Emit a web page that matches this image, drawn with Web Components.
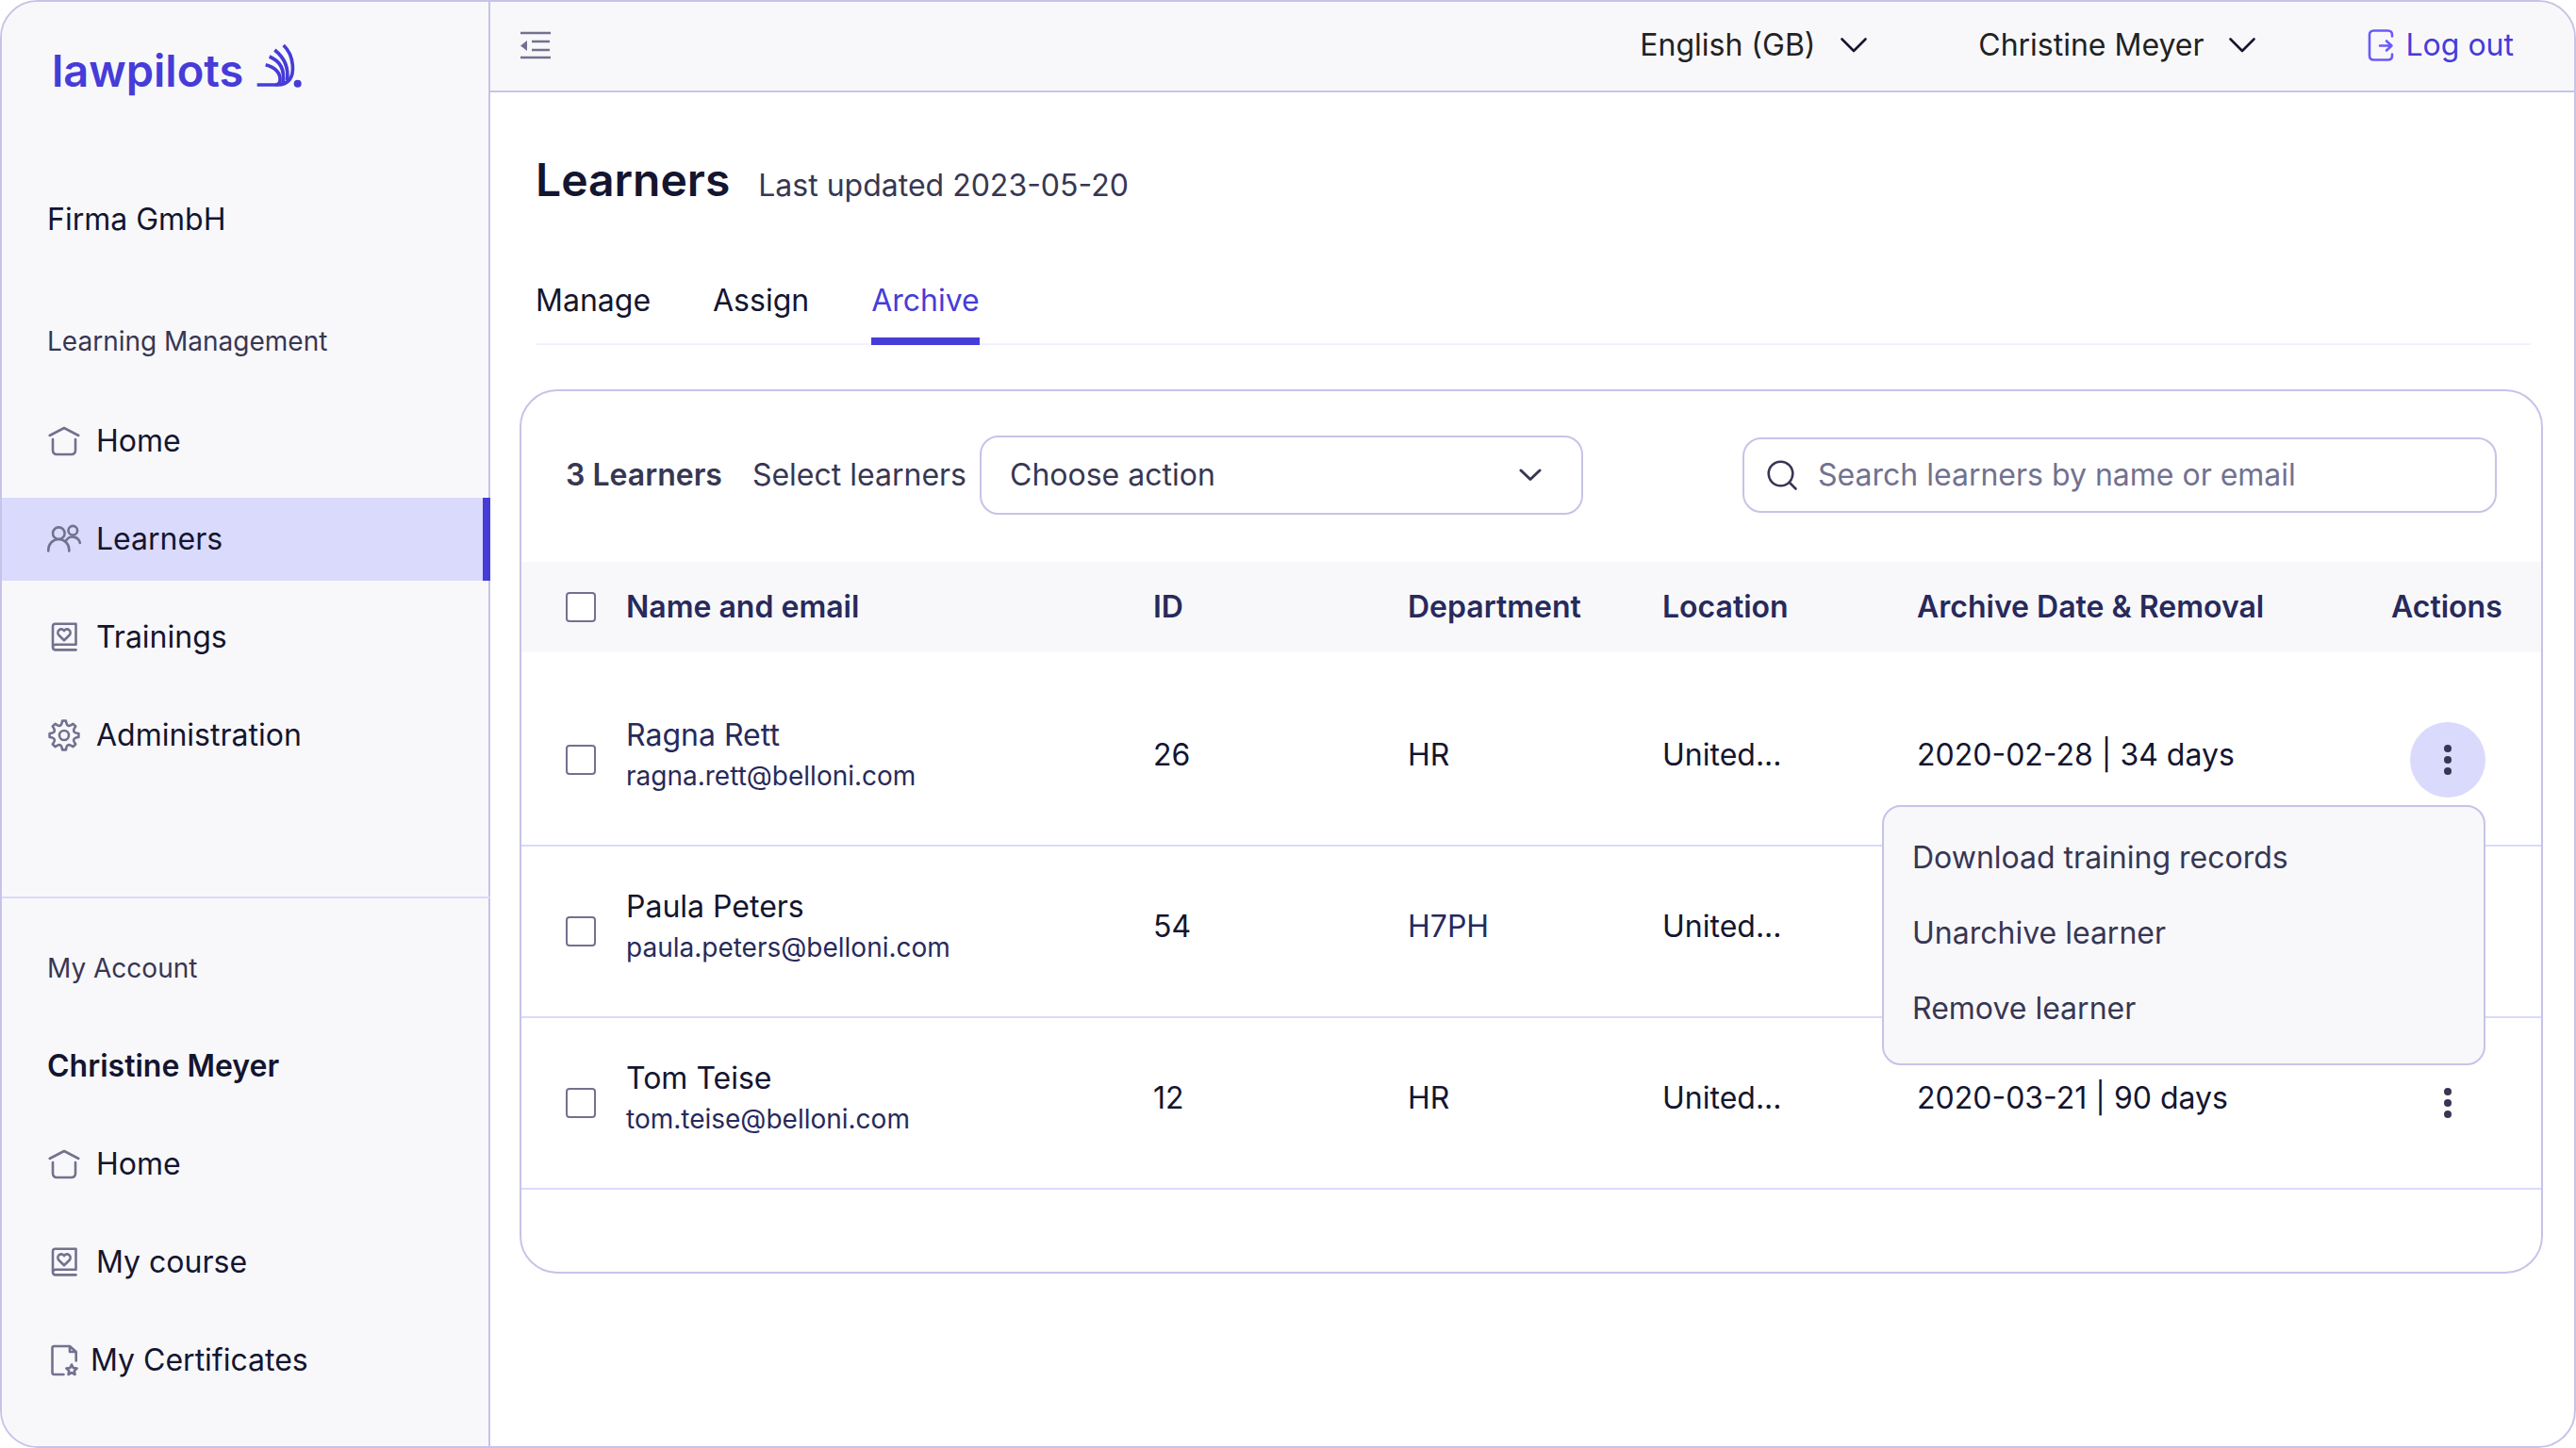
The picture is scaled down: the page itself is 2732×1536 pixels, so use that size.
<!DOCTYPE html>
<html lang="en">
<head>
<meta charset="utf-8">
<meta name="viewport" content="width=device-width, initial-scale=1">
<title>Learners</title>
<style>
    :root {
        --ink: #14152f;
        --navy: #272a5b;
        --text: #373753;
        --muted: #72718f;
        --brand: #463cd8;
        --line: #c5c4e8;
        --line-soft: #dadafc;
        --surface: #f8f8fb;
    }
    body {
        margin: 0;
        background: #fff;
        color: var(--ink);
        font: 400 32px/40px Inter, "Liberation Sans", sans-serif;
    }
</style>
</head>
<body>
<learner-app>
    <side-bar slot="sidebar">
        <span slot="company">Firma GmbH</span>
        <span slot="section">Learning Management</span>
        <nav-item slot="main" icon="home">Home</nav-item>
        <nav-item slot="main" icon="users" active>Learners</nav-item>
        <nav-item slot="main" icon="book">Trainings</nav-item>
        <nav-item slot="main" icon="cog">Administration</nav-item>
        <span slot="account">My Account</span>
        <span slot="user">Christine Meyer</span>
        <nav-item slot="personal" icon="home">Home</nav-item>
        <nav-item slot="personal" icon="book">My course</nav-item>
        <nav-item slot="personal" icon="certificate" tight>My Certificates</nav-item>
    </side-bar>
    <top-bar slot="header"></top-bar>
    <page-title>Learners<span slot="note">Last updated 2023-05-20</span></page-title>
    <tab-list></tab-list>
    <learner-card>
        <learner-toolbar slot="toolbar"></learner-toolbar>
        <learner-table></learner-table>
    </learner-card>
</learner-app>

<script>
    // closed outline of an eight toothed cog, centred in a 36 unit box
    const cogPath = () => {
        const at = (radius, degrees) => {
            const angle = degrees * Math.PI / 180;
            return `${(18 + radius * Math.sin(angle)).toFixed(1)} ${(18 - radius * Math.cos(angle)).toFixed(1)}`;
        };
        let d = `M${at(15.5, -7)}`;
        for (let a = 0; a < 360; a += 45) {
            d += `L${at(15.5, a + 7)}L${at(12.6, a + 12)}Q${at(10, a + 22.5)} ${at(12.6, a + 33)}L${at(15.5, a + 38)}`;
        }
        return d + 'Z';
    };

    const icons = {
        home: [36, 36, '<path d="M2.7 12 18 4l15.3 8M6 16v11.5Q6 32 10.5 32h15q4.5 0 4.5-4.5V16"/>'],
        users: [36, 36, '<circle cx="12.3" cy="11.7" r="6.3"/><path d="M1.3 30.5v-1.5a11 11 0 0 1 22 0v1.5"/><circle cx="27.3" cy="8.7" r="4.8"/><path d="M20 19.5a8 8 0 0 1 14.8 2.5"/>'],
        book: [36, 36, '<path d="M6 28.5V6.5q0-2.7 2.7-2.7H30.5V25.7H9q-3 0-3 2.8t3 2.9h21.5"/><path d="M18 21.2l-5.6-5.4c-3.4-4.2 2.4-9.2 5.6-4.7 3.2-4.5 9 .5 5.6 4.7z"/>'],
        cog: [36, 36, `<path d="${cogPath()}"/><circle cx="18" cy="18" r="5"/>`],
        certificate: [36, 36, '<path d="M17.5 33H7.5q-2 0-2-2V5q0-2 2-2H24l6.7 6v9.5M24 3v6h6.7"/><path d="M26 22.5l1.7 3.5 3.9.5-2.8 2.6.7 3.9-3.5-1.9-3.5 1.9.7-3.9-2.8-2.6 3.9-.5z"/>'],
        collapse: [32, 30, '<path d="M0 2h32M12 11h19M12 20h19M0 28h32" stroke-width="2.6" stroke-linecap="butt"/><path d="M0 15.5 7 10v11z" fill="currentColor" stroke="none"/>'],
        chevron: [28, 16, '<path d="M1.5 1.5 14 14 26.5 1.5"/>'],
        'chevron-small': [24, 14, '<path d="M2 2l10 9.5L22 2" stroke-width="3"/>'],
        logout: [30, 36, '<path d="M27 8.5V7q0-4.5-4.5-4.5h-15Q3 2.5 3 7v22q0 4.5 4.5 4.5h15q4.5 0 4.5-4.5v-1.5M14 18.5h12.5M21 13.5l5.5 5-5.5 5"/>'],
        search: [32, 32, '<circle cx="14.5" cy="14.5" r="12.8"/><path d="M24 24l6.5 6.5"/>'],
        dots: [8, 32, '<g fill="currentColor" stroke="none"><circle cx="4" cy="4" r="4"/><circle cx="4" cy="16" r="4"/><circle cx="4" cy="28" r="4"/></g>'],
    };

    class BaseElement extends HTMLElement {
        constructor() {
            super();
            this._shadowdom = this.attachShadow({ mode: 'open' });
        }

        connectedCallback() {
            this.render();
        }
    }

    class UiIcon extends BaseElement {
        render() {
            const [width, height, shapes] = icons[this.getAttribute('name')];
            this._shadowdom.innerHTML = /* html */ `
                <style>
                    :host {
                        display: block;
                        flex: none;
                    }
                    svg {
                        display: block;
                        overflow: visible;
                        fill: none;
                        stroke: currentColor;
                        stroke-width: 2.6;
                        stroke-linecap: round;
                        stroke-linejoin: round;
                    }
                </style>
                <svg width="${width}" height="${height}" viewBox="0 0 ${width} ${height}" aria-hidden="true">${shapes}</svg>
            `;
        }
    }

    class BrandLogo extends BaseElement {
        render() {
            this._shadowdom.innerHTML = /* html */ `
                <style>
                    :host {
                        display: block;
                    }
                    a {
                        display: flex;
                        gap: 14px;
                        color: var(--brand);
                        font-size: 47px;
                        font-weight: 600;
                        line-height: 58px;
                        text-decoration: none;
                    }
                    svg {
                        display: block;
                        fill: none;
                        stroke: currentColor;
                        stroke-width: 11;
                    }
                </style>
                <a href="#">lawpilots
                    <svg width="50" height="50" viewBox="698 30 150 150" aria-hidden="true">
                        <path d="M700 162h65c36 0 51-24 48-62-2-24-12-48-29-64"/>
                        <path d="M756 51c30 24 46 56 39 98"/>
                        <path d="M739 72c34 14 50 42 43 84"/>
                        <path d="M727 98c32 8 48 28 46 50q-1 12-14 14"/>
                        <circle cx="829" cy="158" r="12" fill="currentColor" stroke="none"/>
                    </svg>
                </a>
            `;
        }
    }

    class NavItem extends BaseElement {
        render() {
            this._shadowdom.innerHTML = /* html */ `
                <style>
                    :host {
                        display: block;
                    }
                    a {
                        display: flex;
                        align-items: center;
                        gap: 16px;
                        height: 88px;
                        box-sizing: border-box;
                        padding-left: 48px;
                        color: inherit;
                        text-decoration: none;
                    }
                    ui-icon {
                        color: var(--muted);
                    }
                    :host([tight]) a {
                        gap: 10px;
                    }
                    /* the marker of the current page covers the sidebar border */
                    :host([active]) a {
                        margin-right: -2px;
                        background: var(--line-soft);
                        border-right: 8px solid var(--brand);
                    }
                </style>
                <a href="#" ${this.hasAttribute('active') ? 'aria-current="page"' : ''}>
                    <ui-icon name="${this.getAttribute('icon')}"></ui-icon>
                    <slot></slot>
                </a>
            `;
        }
    }

    class SideBar extends BaseElement {
        render() {
            this._shadowdom.innerHTML = /* html */ `
                <style>
                    :host {
                        display: block;
                        background: var(--surface);
                        border-right: 2px solid var(--line);
                    }
                    brand-logo {
                        padding: 44px 0 109px 53px;
                    }
                    p, h2 {
                        margin: 0;
                        padding-left: 48px;
                        font-size: 32px;
                        font-weight: 400;
                        line-height: 40px;
                    }
                    .section {
                        margin-top: 89px;
                        color: var(--text);
                        font-size: 28px;
                    }
                    nav {
                        display: grid;
                        gap: 16px;
                        margin-top: 42px;
                    }
                    .account {
                        margin: 127px -2px 0 0;
                        border-top: 2px solid var(--line-soft);
                    }
                    .account .section {
                        margin-top: 54px;
                    }
                    .account nav {
                        margin: 40px 2px 0 0;
                    }
                    .user {
                        margin-top: 64px;
                        font-weight: 600;
                    }
                </style>
                <brand-logo></brand-logo>
                <p><slot name="company"></slot></p>
                <h2 class="section"><slot name="section"></slot></h2>
                <nav aria-label="Learning Management"><slot name="main"></slot></nav>
                <div class="account">
                    <h2 class="section"><slot name="account"></slot></h2>
                    <p class="user"><slot name="user"></slot></p>
                    <nav aria-label="My Account"><slot name="personal"></slot></nav>
                </div>
            `;
        }
    }

    class TopBar extends BaseElement {
        render() {
            this._shadowdom.innerHTML = /* html */ `
                <style>
                    :host {
                        display: flex;
                        align-items: center;
                        gap: 118px;
                        height: 92px;
                        padding: 0 64px 2px 32px;
                        background: var(--surface);
                        border-bottom: 2px solid var(--line);
                        color: #222;
                    }
                    button, select {
                        appearance: none;
                        margin: 0;
                        padding: 0;
                        border: 0;
                        background: none;
                        color: inherit;
                        font: inherit;
                    }
                    .collapse {
                        margin-right: auto;
                        color: var(--muted);
                    }
                    .dropdown {
                        display: flex;
                        align-items: center;
                        gap: 26px;
                    }
                    .dropdown ui-icon {
                        color: var(--ink);
                    }
                    a {
                        display: flex;
                        align-items: center;
                        gap: 12px;
                        color: var(--brand);
                        text-decoration: none;
                    }
                    a ui-icon {
                        color: #6a5afa;
                    }
                </style>
                <button class="collapse" type="button" aria-label="Collapse sidebar"><ui-icon name="collapse"></ui-icon></button>
                <label class="dropdown">
                    <select aria-label="Language"><option>English (GB)</option></select>
                    <ui-icon name="chevron"></ui-icon>
                </label>
                <button class="dropdown" type="button" aria-haspopup="menu">Christine Meyer<ui-icon name="chevron"></ui-icon></button>
                <a href="#"><ui-icon name="logout"></ui-icon>Log out</a>
            `;
        }
    }

    class PageTitle extends BaseElement {
        render() {
            this._shadowdom.innerHTML = /* html */ `
                <style>
                    :host {
                        display: flex;
                        align-items: baseline;
                        gap: 30px;
                        padding: 65px 46px 0 48px;
                    }
                    h1 {
                        margin: 0;
                        font-size: 48px;
                        font-weight: 600;
                        line-height: 56px;
                    }
                    p {
                        margin: 0;
                        color: var(--text);
                    }
                </style>
                <h1><slot></slot></h1>
                <p><slot name="note"></slot></p>
            `;
        }
    }

    class TabList extends BaseElement {
        render() {
            this._shadowdom.innerHTML = /* html */ `
                <style>
                    :host {
                        display: block;
                        margin: 80px 46px 47px 48px;
                    }
                    nav {
                        display: flex;
                        gap: 66px;
                        box-shadow: inset 0 -2px #f1f0fe;
                    }
                    a {
                        padding-bottom: 19px;
                        border-bottom: 8px solid transparent;
                        color: inherit;
                        text-decoration: none;
                    }
                    a[aria-current] {
                        border-color: var(--brand);
                        color: var(--brand);
                    }
                </style>
                <nav aria-label="Learners">
                    <a href="#">Manage</a>
                    <a href="#">Assign</a>
                    <a href="#" aria-current="page">Archive</a>
                </nav>
            `;
        }
    }

    class LearnerToolbar extends BaseElement {
        render() {
            this._shadowdom.innerHTML = /* html */ `
                <style>
                    :host {
                        display: flex;
                        align-items: center;
                        padding: 47px 47px 50px;
                        color: var(--text);
                    }
                    strong {
                        margin-right: 32px;
                        font-weight: 600;
                    }
                    .action {
                        position: relative;
                        flex: 0 1 640px;
                        margin: 0 auto 0 14px;
                    }
                    select {
                        display: block;
                        appearance: none;
                        width: 100%;
                        height: 84px;
                        box-sizing: border-box;
                        padding: 0 80px 0 30px;
                        border: 2px solid var(--line);
                        border-radius: 20px;
                        background: #fff;
                        color: inherit;
                        font: inherit;
                    }
                    .action ui-icon {
                        position: absolute;
                        top: 35px;
                        right: 44px;
                        pointer-events: none;
                    }
                    .search {
                        display: flex;
                        align-items: center;
                        gap: 22px;
                        flex: 0 1 800px;
                        height: 80px;
                        box-sizing: border-box;
                        padding: 0 24px;
                        border: 2px solid var(--line);
                        border-radius: 20px;
                    }
                    input {
                        flex: 1;
                        min-width: 0;
                        padding: 0;
                        border: 0;
                        outline: 0;
                        background: none;
                        color: inherit;
                        font: inherit;
                    }
                    input::placeholder {
                        color: var(--muted);
                        opacity: 1;
                    }
                </style>
                <strong>3 Learners</strong>
                <label for="action">Select learners</label>
                <div class="action">
                    <select id="action"><option>Choose action</option></select>
                    <ui-icon name="chevron-small"></ui-icon>
                </div>
                <label class="search">
                    <ui-icon name="search"></ui-icon>
                    <input type="search" placeholder="Search learners by name or email" aria-label="Search learners by name or email">
                </label>
            `;
        }
    }

    class CheckBox extends BaseElement {
        render() {
            this._shadowdom.innerHTML = /* html */ `
                <style>
                    :host {
                        display: block;
                    }
                    input {
                        display: block;
                        appearance: none;
                        width: 32px;
                        height: 32px;
                        margin: 0;
                        border: 2px solid var(--muted);
                        border-radius: 4px;
                        background: #fff;
                    }
                    input:checked {
                        background: var(--brand);
                    }
                </style>
                <input type="checkbox" aria-label="${this.getAttribute('label')}">
            `;
        }
    }

    class RowActions extends BaseElement {
        render() {
            const open = this.hasAttribute('open');
            this._shadowdom.innerHTML = /* html */ `
                <style>
                    :host {
                        display: block;
                        position: relative;
                        width: 80px;
                    }
                    button {
                        font: inherit;
                        color: var(--text);
                        border: 0;
                        background: none;
                    }
                    .toggle {
                        display: grid;
                        place-items: center;
                        width: 80px;
                        height: 80px;
                        padding: 0;
                        border-radius: 50%;
                    }
                    .toggle[aria-expanded="true"] {
                        background: var(--line-soft);
                    }
                    .menu {
                        position: absolute;
                        z-index: 1;
                        top: 88px;
                        right: 0;
                        width: 640px;
                        box-sizing: border-box;
                        padding: 14px 0 18px;
                        border: 2px solid var(--line);
                        border-radius: 20px;
                        background: var(--surface);
                    }
                    .menu button {
                        display: block;
                        width: 100%;
                        height: 80px;
                        padding: 0 30px;
                        text-align: left;
                    }
                </style>
                <button class="toggle" type="button" aria-label="Actions" aria-haspopup="menu" aria-expanded="${open}">
                    <ui-icon name="dots"></ui-icon>
                </button>
                ${open ? /* html */ `
                <div class="menu" role="menu">
                    <button type="button" role="menuitem">Download training records</button>
                    <button type="button" role="menuitem">Unarchive learner</button>
                    <button type="button" role="menuitem">Remove learner</button>
                </div>` : ''}
            `;
        }
    }

    class LearnerTable extends BaseElement {
        constructor() {
            super();
            this._learners = [
                { name: 'Ragna Rett', email: 'ragna.rett@belloni.com', id: 26, department: 'HR', location: 'United...', archived: '2020-02-28 | 34 days', open: true, tint: 'name' },
                { name: 'Paula Peters', email: 'paula.peters@belloni.com', id: 54, department: 'H7PH', location: 'United...', archived: '', tint: 'department', covered: true },
                { name: 'Tom Teise', email: 'tom.teise@belloni.com', id: 12, department: 'HR', location: 'United...', archived: '2020-03-21 | 90 days' },
            ];
        }

        row({ name, email, id, department, location, archived, open, tint, covered }) {
            return /* html */ `
                <tr>
                    <td class="check"><check-box label="Select ${name}"></check-box></td>
                    <td class="${tint === 'name' ? 'navy' : ''}">${name}<br><a href="#">${email}</a></td>
                    <td>${id}</td>
                    <td class="${tint === 'department' ? 'navy' : ''}">${department}</td>
                    <td>${location}</td>
                    <td>${archived}</td>
                    <td class="actions">${covered ? '' : `<row-actions ${open ? 'open' : ''}></row-actions>`}</td>
                </tr>
            `;
        }

        render() {
            this._shadowdom.innerHTML = /* html */ `
                <style>
                    :host {
                        display: block;
                    }
                    table {
                        width: 100%;
                        table-layout: fixed;
                        border-collapse: separate;
                        border-spacing: 0;
                    }
                    .col-check { width: 111px; }
                    .col-small { width: 270px; }
                    .col-date { width: 503px; }
                    .col-actions { width: 159px; }
                    th {
                        height: 96px;
                        padding: 0;
                        background: var(--surface);
                        color: var(--navy);
                        font-weight: 600;
                        text-align: left;
                        white-space: nowrap;
                    }
                    /* breathing room between the head and the first row */
                    tbody::before {
                        content: "";
                        display: table-row;
                        height: 24px;
                    }
                    td {
                        height: 170px;
                        padding: 0 0 10px;
                        border-bottom: 2px solid var(--line-soft);
                        line-height: 42px;
                    }
                    .check {
                        padding: 0 0 0 47px;
                    }
                    .actions {
                        padding: 0 0 0 20px;
                    }
                    td.check, td.actions {
                        height: 180px;
                    }
                    .navy {
                        color: var(--navy);
                    }
                    td a {
                        color: var(--navy);
                        font-size: 28px;
                        text-decoration: none;
                    }
                </style>
                <table>
                    <colgroup>
                        <col class="col-check"><col><col class="col-small"><col class="col-small">
                        <col class="col-small"><col class="col-date"><col class="col-actions">
                    </colgroup>
                    <thead>
                        <tr>
                            <th class="check"><check-box label="Select all learners"></check-box></th>
                            <th>Name and email</th>
                            <th>ID</th>
                            <th>Department</th>
                            <th>Location</th>
                            <th>Archive Date &amp; Removal</th>
                            <th>Actions</th>
                        </tr>
                    </thead>
                    <tbody>${this._learners.map((learner) => this.row(learner)).join('')}</tbody>
                </table>
            `;
        }
    }

    class LearnerCard extends BaseElement {
        render() {
            this._shadowdom.innerHTML = /* html */ `
                <style>
                    :host {
                        display: block;
                        margin: 0 33px 0 31px;
                        padding-bottom: 87px;
                        border: 2px solid var(--line);
                        border-radius: 40px;
                    }
                </style>
                <slot name="toolbar"></slot>
                <slot></slot>
            `;
        }
    }

    class LearnerApp extends BaseElement {
        render() {
            this._shadowdom.innerHTML = /* html */ `
                <style>
                    :host {
                        display: grid;
                        grid-template-columns: 518px minmax(0, 1fr);
                        grid-template-rows: auto 1fr;
                        min-height: 100vh;
                        box-sizing: border-box;
                        border: 2px solid var(--line);
                        border-radius: 40px;
                        overflow: hidden;
                    }
                    .sidebar {
                        display: grid;
                        grid-row: span 2;
                    }
                </style>
                <div class="sidebar"><slot name="sidebar"></slot></div>
                <header><slot name="header"></slot></header>
                <main><slot></slot></main>
            `;
        }
    }

    customElements.define('ui-icon', UiIcon);
    customElements.define('brand-logo', BrandLogo);
    customElements.define('nav-item', NavItem);
    customElements.define('side-bar', SideBar);
    customElements.define('top-bar', TopBar);
    customElements.define('page-title', PageTitle);
    customElements.define('tab-list', TabList);
    customElements.define('learner-toolbar', LearnerToolbar);
    customElements.define('check-box', CheckBox);
    customElements.define('row-actions', RowActions);
    customElements.define('learner-table', LearnerTable);
    customElements.define('learner-card', LearnerCard);
    customElements.define('learner-app', LearnerApp);
</script>
</body>
</html>
